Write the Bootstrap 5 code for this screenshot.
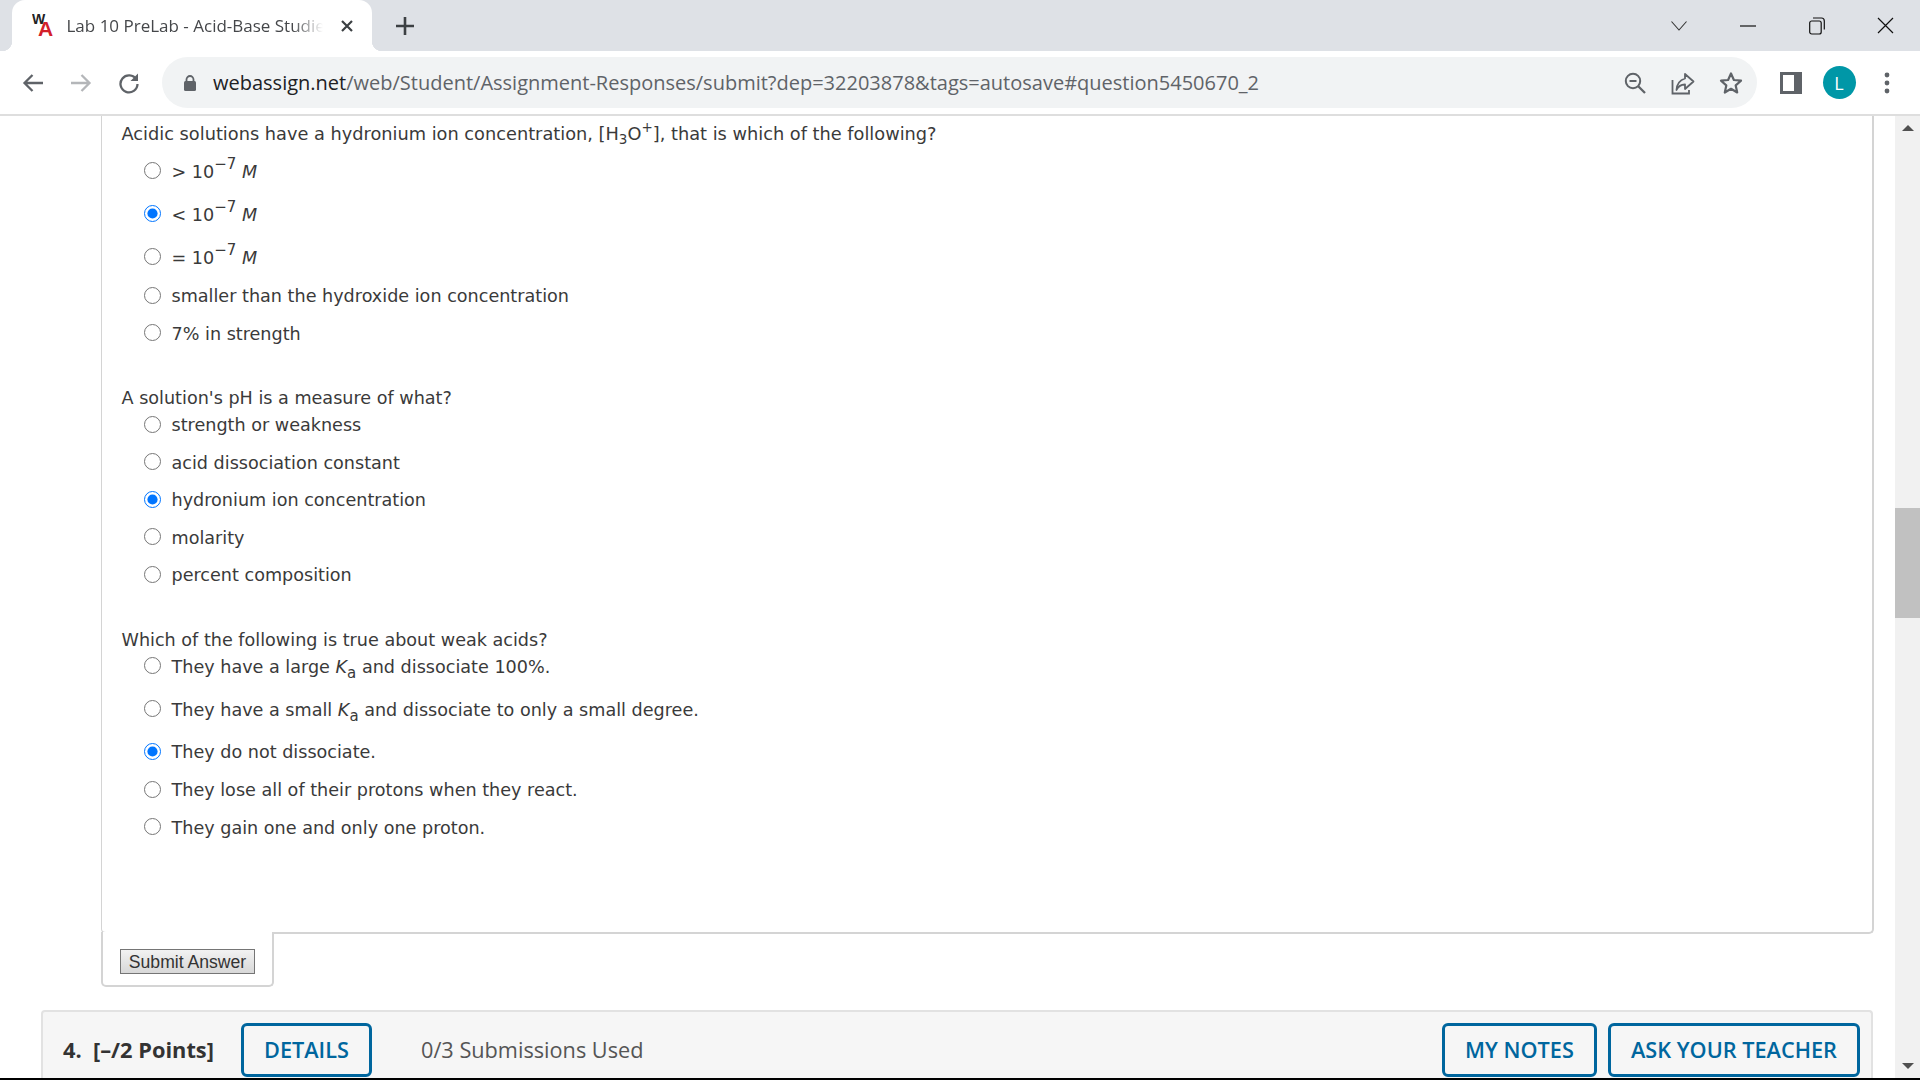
<!DOCTYPE html>
<html lang="en">
<head>
<meta charset="utf-8">
<title>Lab 10 PreLab - Acid-Base Studies</title>
<link href="https://cdn.jsdelivr.net/npm/bootstrap@5.3.0/dist/css/bootstrap.min.css" rel="stylesheet">
<style>
html,body{height:100%;overflow:hidden;background:#fff}
.shell{height:1080px}
.tabstrip{height:51px;background:#dee1e6;flex:none}
.tabitem{width:360px;height:51px;margin-left:12px;background:#fff;border-radius:13px 13px 0 0;position:relative;padding:0 18px 0 20px}
.tabitem::before,.tabitem::after{content:"";position:absolute;bottom:0;width:10px;height:10px}
.tabitem::before{left:-10px;background:radial-gradient(circle at 0 0,transparent 10px,#fff 10.5px)}
.tabitem::after{right:-10px;background:radial-gradient(circle at 100% 0,transparent 10px,#fff 10.5px)}
.tabtitle{font:17px "Open Sans",sans-serif;color:#45474a;white-space:nowrap;overflow:hidden;width:256px;margin-left:12.5px;-webkit-mask-image:linear-gradient(90deg,#000 88%,transparent 100%);mask-image:linear-gradient(90deg,#000 88%,transparent 100%)}
.newtab{margin-left:23px}
.wincontrols{margin-left:auto}
.wincell{width:69px;display:flex;justify-content:center}
.toolbar{height:65px;background:#fff;border-bottom:2px solid #dedede;flex:none;padding:6px 0}
.navcell{width:48px;display:flex;justify-content:center}
.navfirst{margin-left:9px}
.omnibox{height:51px;width:1595px;background:#f1f3f4;border-radius:26px;padding:0 2px 0 21px;margin-left:9px}
.urltext{font:20px "Open Sans",sans-serif;color:#5f6368;margin-left:16px;white-space:nowrap}
.urlhost{color:#202124}
.omniicons{margin-left:auto}
.omnicell{width:48px;display:flex;justify-content:center}
.toolcell{width:48px;display:flex;justify-content:center}
.toolfirst{margin-left:10px}
.avatar{width:33px;height:33px;border-radius:50%;background:#0097a7;color:#fff;font:18px "Open Sans",sans-serif}
.viewport{min-height:0;overflow:hidden}
.pagecol{min-width:0;position:relative;padding-left:41px}
.questionbox{width:1772.5px;margin-left:60px;height:818px;border:2px solid #d4d4d4;border-top:0;border-left-width:1.5px;border-radius:0 0 5px 5px;padding:0 0 0 19.5px;font:17.6px "DejaVu Sans","Liberation Sans",sans-serif;color:#3a3a3a;position:relative}
.qtext{height:31.5px;display:flex;align-items:center;padding-top:4px;font-size:17.75px}
.qtext sup,.qtext sub{font-size:13.5px}
.ansrow{display:flex;align-items:center;padding-left:20.5px;padding-top:2px;margin:0}
.ansrow input{width:17px;height:17px;margin:-2px 10.5px 0 2px;accent-color:#0075ff;flex:none}
.rowplain{height:37.5px}
.rowmath{height:43px}
.rowlift{padding-top:5px}
.rowshort{height:40.5px;padding-top:4px}
.qspace{height:37.75px}
.qspacewide{height:41.25px}
.qhead{height:16px;line-height:18px;white-space:nowrap}
.qheadtight{height:10px;line-height:12px}
.mi{font-style:italic}
sup,sub{font-size:15px;line-height:0}
sup{top:-.55em}
sub{bottom:-.35em}
.notch{position:absolute;left:-1.5px;top:816px;width:173.5px;height:55px;background:#fff;border:2px solid #d4d4d4;border-top:0;border-radius:0 0 5px 5px;padding:17px 0 0 17.5px}
.submitbtn{width:135px;height:25px;padding:0;border:1.5px solid #757575;border-radius:0;background:linear-gradient(#f2f2f2,#d8d8d8);font:17.6px "Liberation Sans",sans-serif;color:#333;line-height:22px;display:block}
.qbar{width:1832px;height:68px;margin-top:76px;background:#f6f6f6;border:2px solid #e2e2e2;border-bottom:0;border-radius:4px 4px 0 0;padding:11px 11px 0 20px}
.qnum{font:700 21.8px "Open Sans",sans-serif;color:#333;white-space:pre;width:178px;padding-bottom:2px}
.wabtn{height:54px;border:3px solid #00669e;border-radius:6px;background:transparent;color:#00669e;font:600 21.7px "Open Sans",sans-serif;padding:0;line-height:48px}
.detailsbtn{width:131px}
.notesbtn{width:155px;margin-left:auto}
.askbtn{width:252px;margin-left:11px}
.subcount{font:21.7px "Open Sans",sans-serif;color:#555;margin-left:49px;padding-bottom:2px}
.scrolltrack{width:25px;background:#f1f1f1;position:relative;flex:none}
.scrollthumb{position:absolute;left:0;width:25px;top:392px;height:110px;background:#c1c1c1}
.arrowup,.arrowdown{position:absolute;left:7px;width:0;height:0;border-left:6px solid transparent;border-right:6px solid transparent}
.arrowup{top:9px;border-bottom:6px solid #505050}
.arrowdown{bottom:9px;border-top:6px solid #505050}
.blackstrip{height:2px;background:#000;flex:none}
</style>
</head>
<body>
<div class="shell d-flex flex-column">
  <div class="tabstrip d-flex align-items-center">
    <div class="tabitem d-flex align-items-center">
      <svg width="22" height="30" viewBox="0 0 22 30"><text x="0" y="13" font-family="Liberation Sans" font-weight="700" font-size="14" fill="#222">W</text><text x="6" y="25" font-family="Liberation Sans" font-weight="700" font-size="21" fill="#d3202a">A</text></svg>
      <div class="tabtitle">Lab 10 PreLab - Acid-Base Studies</div>
      <svg width="14" height="14" viewBox="0 0 14 14" class="ms-auto"><path d="M2 2 12 12M12 2 2 12" stroke="#3c4043" stroke-width="2.2"/></svg>
    </div>
    <svg class="newtab" width="20" height="20" viewBox="0 0 20 20"><path d="M10 1V19M1 10H19" stroke="#3c4043" stroke-width="2.6"/></svg>
    <div class="wincontrols d-flex align-items-center">
      <div class="wincell"><svg width="18" height="12" viewBox="0 0 18 12"><path d="M1.500 1.500 9 10 16.500 1.500" fill="none" stroke="#333" stroke-width="1.100"/></svg></div>
      <div class="wincell"><svg width="16" height="4" viewBox="0 0 16 4"><path d="M0 2H16" stroke="#111" stroke-width="1.200"/></svg></div>
      <div class="wincell"><svg width="16" height="18" viewBox="0 0 16 18"><rect x=".7" y="4" width="11.500" height="13" rx="2" fill="none" stroke="#111" stroke-width="1.200"/><path d="M4 1H12.500Q15.300 1 15.300 4V12.500" fill="none" stroke="#111" stroke-width="1.200"/></svg></div>
      <div class="wincell"><svg width="17" height="17" viewBox="0 0 17 17"><path d="M1 1 16 16M16 1 1 16" stroke="#111" stroke-width="1.200"/></svg></div>
    </div>
  </div>

  <div class="toolbar d-flex align-items-center">
    <div class="navcell navfirst"><svg width="22" height="20" viewBox="0 0 22 20"><path d="M21 10H3M10.500 2 2.500 10 10.500 18" fill="none" stroke="#5f6368" stroke-width="2.300"/></svg></div>
    <div class="navcell"><svg width="22" height="20" viewBox="0 0 22 20"><path d="M1 10H19M11.500 2 19.500 10 11.500 18" fill="none" stroke="#b4b6b9" stroke-width="2.300"/></svg></div>
    <div class="navcell"><svg width="22" height="22" viewBox="0 0 22 22"><path d="M18.300 7.500A8.500 8.500 0 1 0 19.500 12" fill="none" stroke="#5f6368" stroke-width="2.300"/><path d="M20 1.500V9H12.500Z" fill="#5f6368"/></svg></div>
    <div class="omnibox d-flex align-items-center">
      <svg width="14" height="18" viewBox="0 0 14 18"><path d="M3.500 8V5.500A3.500 3.500 0 0 1 10.500 5.500V8" fill="none" stroke="#5f6368" stroke-width="1.800"/><rect x="1" y="7" width="12" height="10" rx="1.500" fill="#5f6368"/></svg>
      <div class="urltext"><span class="urlhost">webassign.net</span>/web/Student/Assignment-Responses/submit?dep=32203878&amp;tags=autosave#question5450670_2</div>
      <div class="omniicons d-flex align-items-center">
        <div class="omnicell"><svg width="22" height="22" viewBox="0 0 22 22"><circle cx="9" cy="9" r="7.200" fill="none" stroke="#5f6368" stroke-width="2"/><path d="M14 14 21 21" stroke="#5f6368" stroke-width="2.300"/><path d="M5.500 9H12.500" stroke="#5f6368" stroke-width="2"/></svg></div>
        <div class="omnicell"><svg width="24" height="24" viewBox="0 0 24 24"><path d="M14 3 22.500 10.500 14 18V13.500Q8 13.500 5.500 19 6 10 14 7.500Z" fill="none" stroke="#5f6368" stroke-width="1.800" stroke-linejoin="round"/><path d="M1.500 9V22.500H18V19" fill="none" stroke="#5f6368" stroke-width="1.800"/></svg></div>
        <div class="omnicell"><svg width="24" height="24" viewBox="0 0 24 24"><path d="M12 2.500 14.900 9 22 9.700 16.700 14.400 18.200 21.500 12 17.800 5.800 21.500 7.300 14.400 2 9.700 9.100 9Z" fill="none" stroke="#5f6368" stroke-width="2.200" stroke-linejoin="round"/></svg></div>
      </div>
    </div>
    <div class="toolcell toolfirst"><svg width="22" height="22" viewBox="0 0 22 22"><rect width="22" height="22" fill="#5f6368"/><rect x="3" y="3" width="11" height="16" fill="#fff"/></svg></div>
    <div class="toolcell"><div class="avatar d-flex align-items-center justify-content-center">L</div></div>
    <div class="toolcell"><svg width="6" height="22" viewBox="0 0 6 22"><circle cx="3" cy="3" r="2.400" fill="#5f6368"/><circle cx="3" cy="11" r="2.400" fill="#5f6368"/><circle cx="3" cy="19" r="2.400" fill="#5f6368"/></svg></div>
  </div>

  <div class="viewport flex-grow-1 d-flex">
    <div class="pagecol flex-grow-1">
      <div class="questionbox">
        <div class="qtext"><span>Acidic solutions have a hydronium ion concentration, [H<sub>3</sub>O<sup>+</sup>], that is which of the following?</span></div>
        <label class="ansrow rowmath rowlift"><input type="radio" name="q1"><span>&gt; 10<sup>&minus;7</sup> <span class="mi">M</span></span></label>
        <label class="ansrow rowmath rowlift"><input type="radio" name="q1" checked><span>&lt; 10<sup>&minus;7</sup> <span class="mi">M</span></span></label>
        <label class="ansrow rowmath rowlift"><input type="radio" name="q1"><span>= 10<sup>&minus;7</sup> <span class="mi">M</span></span></label>
        <label class="ansrow rowplain"><input type="radio" name="q1">smaller than the hydroxide ion concentration</label>
        <label class="ansrow rowplain"><input type="radio" name="q1">7% in strength</label>
        <div class="qspace"></div>
        <div class="qhead">A solution's pH is a measure of what?</div>
        <label class="ansrow rowplain"><input type="radio" name="q2">strength or weakness</label>
        <label class="ansrow rowplain"><input type="radio" name="q2">acid dissociation constant</label>
        <label class="ansrow rowplain"><input type="radio" name="q2" checked>hydronium ion concentration</label>
        <label class="ansrow rowplain"><input type="radio" name="q2">molarity</label>
        <label class="ansrow rowplain"><input type="radio" name="q2">percent composition</label>
        <div class="qspacewide"></div>
        <div class="qhead qheadtight">Which of the following is true about weak acids?</div>
        <label class="ansrow rowmath"><input type="radio" name="q3"><span>They have a large <span class="mi">K</span><sub>a</sub> and dissociate 100%.</span></label>
        <label class="ansrow rowmath"><input type="radio" name="q3"><span>They have a small <span class="mi">K</span><sub>a</sub> and dissociate to only a small degree.</span></label>
        <label class="ansrow rowshort"><input type="radio" name="q3" checked>They do not dissociate.</label>
        <label class="ansrow rowplain"><input type="radio" name="q3">They lose all of their protons when they react.</label>
        <label class="ansrow rowplain"><input type="radio" name="q3">They gain one and only one proton.</label>
        <div class="notch"><button type="button" class="submitbtn">Submit Answer</button></div>
      </div>
      <div class="qbar d-flex">
        <div class="qnum align-self-center">4.  [&ndash;/2 Points]</div>
        <button type="button" class="wabtn detailsbtn">DETAILS</button>
        <div class="subcount align-self-center">0/3 Submissions Used</div>
        <button type="button" class="wabtn notesbtn">MY NOTES</button>
        <button type="button" class="wabtn askbtn">ASK YOUR TEACHER</button>
      </div>
    </div>
    <div class="scrolltrack">
      <div class="arrowup"></div>
      <div class="scrollthumb"></div>
      <div class="arrowdown"></div>
    </div>
  </div>
  <div class="blackstrip"></div>
</div>
</body>
</html>
